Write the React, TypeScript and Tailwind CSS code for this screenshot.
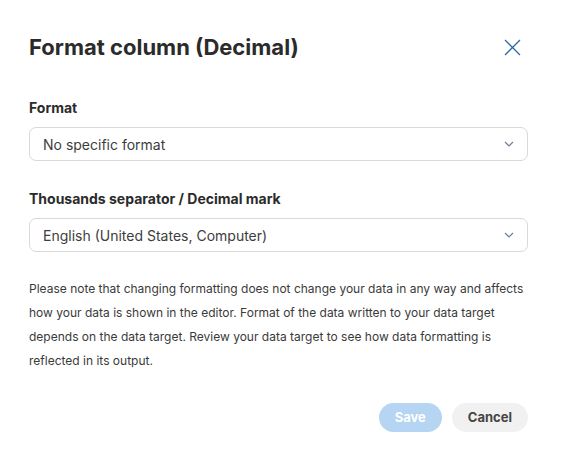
import { useState } from "react";

type SelectProps = {
  value: string;
};

function SelectBox({ value }: SelectProps) {
  return (
    <div className="flex items-center justify-between h-[34px] px-[13px] rounded-[7px] border border-[#d6d9de] bg-white">
      <span className="text-[14px] text-[#3d3d3d]">{value}</span>
      <svg width="10" height="6" viewBox="0 0 10 6" fill="none">
        <path d="M1 1l4 4 4-4" stroke="#6a7f99" strokeWidth="1.2" />
      </svg>
    </div>
  );
}

export default function App() {
  const [format] = useState("No specific format");
  const [locale] = useState("English (United States, Computer)");

  return (
    <div className="w-[561px] h-[469px] bg-white" style={{ fontFamily: "Inter, 'Noto Sans', sans-serif" }}>
      <div className="w-[560px] h-[469px] pl-[29px] pr-[32px]">
        {/* Header */}
        <div className="flex items-center justify-between pt-[31px]">
          <h1 className="text-[22px] font-bold text-[#2b2b2b]">Format column (Decimal)</h1>
          <button className="w-[18px] h-[18px] mr-[7px] flex items-center justify-center">
            <svg width="17" height="17" viewBox="0 0 17 17" fill="none">
              <path d="M1 1l15 15M16 1L1 16" stroke="#2f6aa3" strokeWidth="1.3" />
            </svg>
          </button>
        </div>

        {/* Format */}
        <div className="mt-[33px] text-[14px] font-bold text-[#2b2b2b]">Format</div>
        <div className="mt-[9px]">
          <SelectBox value={format} />
        </div>

        <div className="mt-[27px] text-[14px] font-bold text-[#2b2b2b]">Thousands separator / Decimal mark</div>
        <div className="mt-[9px]">
          <SelectBox value={locale} />
        </div>

        <p className="mt-[25px] text-[12px] leading-[24px] text-[#3a3a3a]">
          Please note that changing formatting does not change your data in any way and affects how your data is shown in the editor. Format of the data written to your data target depends on the data target. Review your data target to see how data formatting is reflected in its output.
        </p>

        <div className="flex justify-end gap-[10px] mt-[30px]">
          <button className="h-[29px] px-[16px] rounded-full bg-[#b5d5f3] text-white text-[13px] font-bold">Save</button>
          <button className="h-[29px] px-[16px] rounded-full bg-[#f1f1f1] text-[#454545] text-[13px] font-bold">Cancel</button>
        </div>
      </div>
    </div>
  );
}
